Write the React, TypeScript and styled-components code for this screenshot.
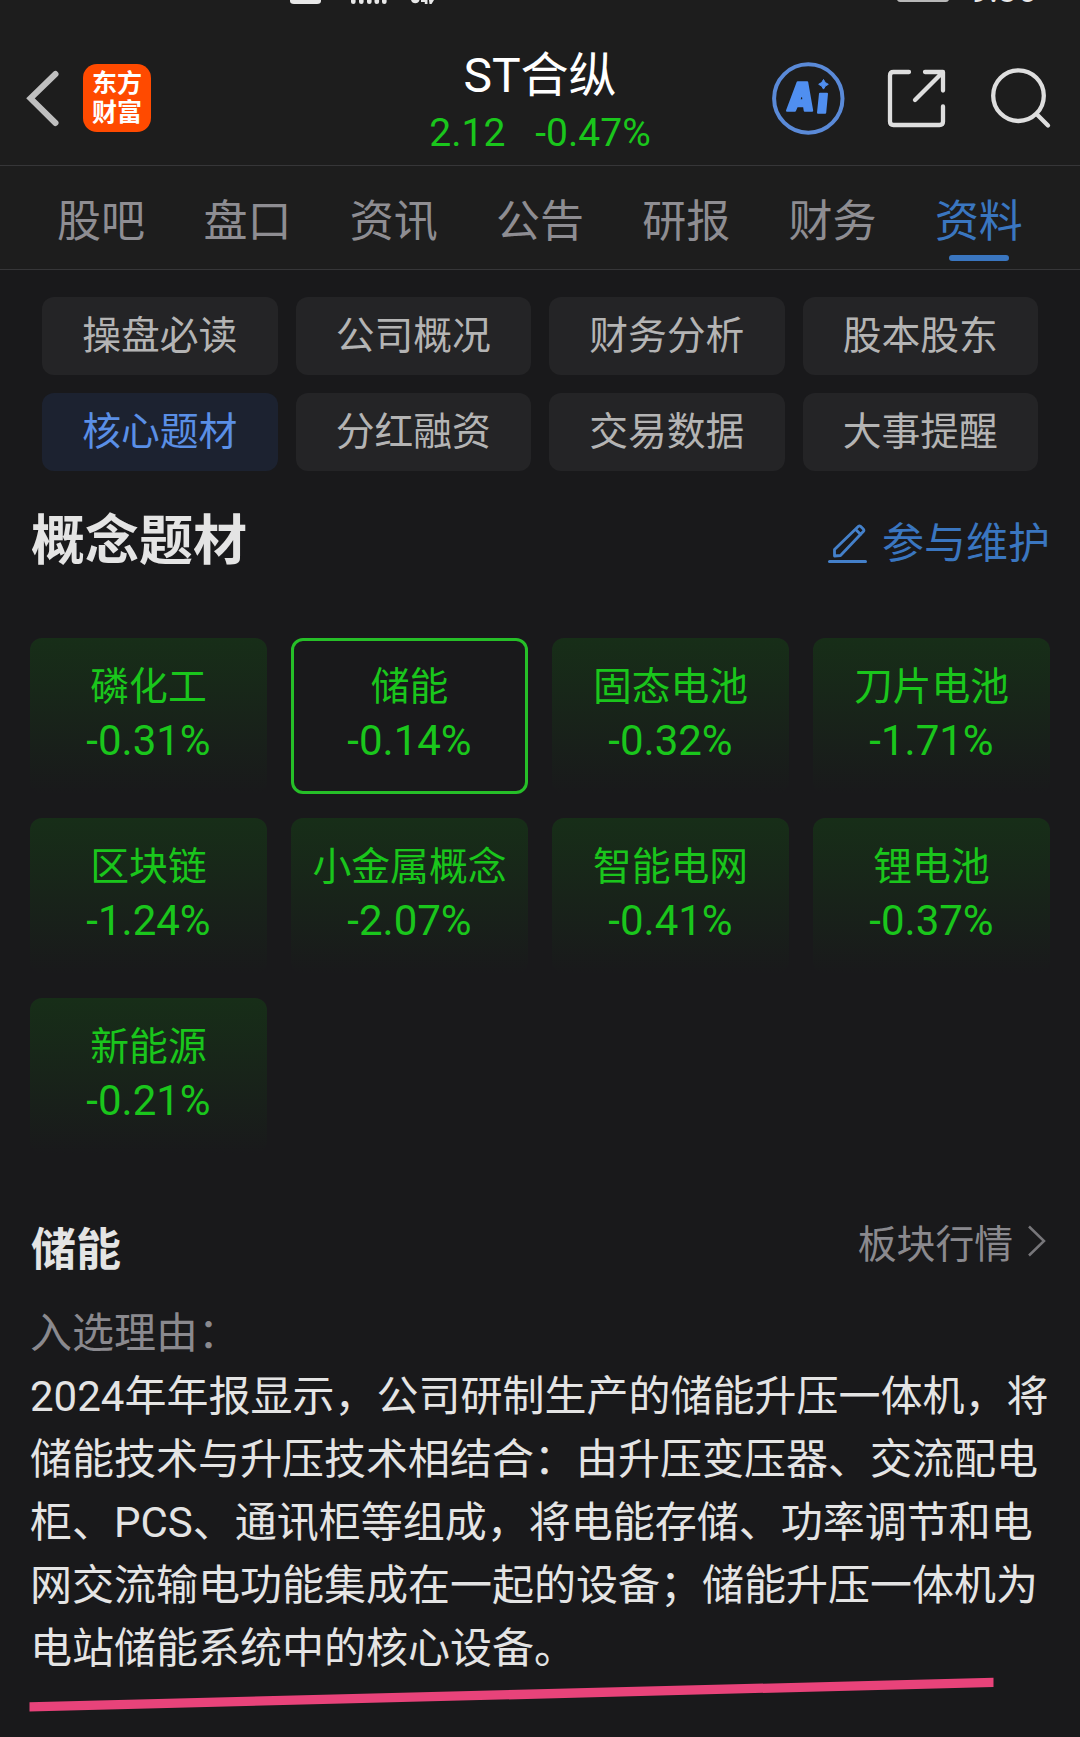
import React from "react";
import styled, { createGlobalStyle } from "styled-components";

const GlobalStyle = createGlobalStyle`
  *, *::before, *::after { box-sizing: border-box; }
  html, body { margin: 0; background: #19191b; }
  body { font-family: Roboto, "Noto Sans CJK SC", sans-serif; }
  h1, h2, p { margin: 0; font-weight: 400; }
  button { border: 0; padding: 0; margin: 0; background: none; font: inherit; color: inherit; }
  svg { display: block; flex: none; }
`;

const GREEN = "#1ac61c";
const BLUE = "#3a76c0";

const Screen = styled.div`
  position: relative;
  width: 1080px;
  height: 1737px;
  overflow: hidden;
  background: #19191b;
  color: #e4e4e4;
`;

const StatusBar = styled.div`
  height: 30px;
  display: flex;
  justify-content: space-between;
  align-items: flex-start;
  padding: 0 43px 0 290px;
`;

const StatusGroup = styled.div`
  display: flex;
  align-items: flex-start;
`;

const Clock = styled.span`
  height: 4px;
  margin-left: 21px;
  font-size: 35px;
  line-height: 40px;
  display: flex;
  align-items: flex-end;
  overflow: hidden;
  color: #e8e8e8;
  span { margin-bottom: -7px; }
`;

const Top = styled.header`
  background: #1d1d1d;
`;

const NavBar = styled.div`
  display: grid;
  grid-template-columns: 1fr auto 1fr;
  height: 136px;
  border-bottom: 1px solid #363638;
`;

const NavLeft = styled.div`
  display: flex;
  align-items: center;
  gap: 23px;
  height: 136px;
  padding-left: 26px;
`;

const NavRight = styled.div`
  display: flex;
  align-items: center;
  justify-content: flex-end;
  height: 136px;
  padding-right: 28px;
`;

const AppLogo = styled.div`
  display: flex;
  flex-direction: column;
  align-items: center;
  justify-content: center;
  width: 68px;
  height: 68px;
  border-radius: 14px;
  background: #ff4a00;
  color: #fff;
  font-size: 25px;
  font-weight: 700;
  line-height: 29px;
`;

const StockHead = styled.div`
  display: flex;
  flex-direction: column;
  align-items: center;
`;

const StockName = styled.h1`
  margin-top: 18px;
  font-size: 48px;
  line-height: 56px;
  color: #fff;
`;

const Quote = styled.div`
  display: flex;
  gap: 30px;
  margin-top: 6px;
  font-size: 39px;
  line-height: 47px;
  color: ${GREEN};
`;

const Tabs = styled.nav`
  display: grid;
  grid-template-columns: repeat(7, 146.3px);
  justify-content: center;
  height: 104px;
  border-bottom: 1px solid #363638;
`;

const Tab = styled.button<{ $active?: boolean }>`
  display: flex;
  flex-direction: column;
  align-items: center;
  font-size: 44px;
  line-height: 60px;
  padding-top: 26px;
  color: ${(p) => (p.$active ? BLUE : "#8e8d92")};
  &::after {
    content: "";
    width: 60px;
    height: 6px;
    margin-top: 3px;
    border-radius: 3px;
    background: ${(p) => (p.$active ? BLUE : "transparent")};
  }
`;

const Chips = styled.div`
  display: grid;
  grid-template-columns: repeat(4, 1fr);
  gap: 18px;
  padding: 27px 42px 0;
`;

const Chip = styled.button<{ $active?: boolean }>`
  height: 78px;
  padding-bottom: 1px;
  border-radius: 12px;
  font-size: 38.8px;
  line-height: 56px;
  background: ${(p) => (p.$active ? "#1c2230" : "#242426")};
  color: ${(p) => (p.$active ? "#5a8fe6" : "#b4b4b4")};
`;

const SectionHead = styled.div<{ $height: number; $top?: number }>`
  display: flex;
  align-items: center;
  justify-content: space-between;
  height: ${(p) => p.$height}px;
  margin-top: ${(p) => p.$top ?? 0}px;
  padding: 0 31px;
`;

const Heading = styled.h2<{ $size: number }>`
  font-size: ${(p) => p.$size}px;
  line-height: 1.4;
  font-weight: 700;
  color: #e4e4e4;
`;

const EditLink = styled.a`
  display: flex;
  align-items: center;
  gap: 15px;
  margin: 4px -1px 0 0;
  font-size: 42px;
  line-height: 60px;
  color: ${BLUE};
`;

const BoardLink = styled.a`
  display: flex;
  align-items: center;
  gap: 14px;
  margin-top: -10px;
  padding-right: 2px;
  font-size: 38.8px;
  line-height: 56px;
  color: #8a898e;
  svg { margin-bottom: 8px; }
`;

const Cards = styled.div`
  display: grid;
  grid-template-columns: repeat(4, 237px);
  gap: 24px;
  margin-top: 25px;
  padding: 0 30px;
`;

const Card = styled.button<{ $selected?: boolean }>`
  display: flex;
  flex-direction: column;
  align-items: center;
  height: 156px;
  padding-top: ${(p) => (p.$selected ? 18 : 21)}px;
  border: ${(p) => (p.$selected ? `3px solid #26bf28` : "0")};
  border-radius: 12px;
  background: ${(p) => (p.$selected ? "transparent" : "linear-gradient(180deg, #172e18 0%, #19191b 100%)")};
  color: ${GREEN};
`;

const CardName = styled.span`
  font-size: 38.8px;
  line-height: 56px;
`;

const CardChange = styled.span`
  font-size: 42px;
  line-height: 50px;
  margin-top: 1px;
`;

const Reason = styled.section`
  padding: 0 30px;
  font-size: 42px;
  line-height: 63px;
`;

const ReasonLabel = styled.p`
  color: #8a898e;
`;

const ReasonLine = styled.p`
  white-space: nowrap;
`;

const Marker = styled.svg`
  position: absolute;
  left: 0;
  bottom: 0;
`;

const tabs = ["股吧", "盘口", "资讯", "公告", "研报", "财务", "资料"];
const chips = ["操盘必读", "公司概况", "财务分析", "股本股东", "核心题材", "分红融资", "交易数据", "大事提醒"];
const concepts: [string, string][] = [
  ["磷化工", "-0.31%"],
  ["储能", "-0.14%"],
  ["固态电池", "-0.32%"],
  ["刀片电池", "-1.71%"],
  ["区块链", "-1.24%"],
  ["小金属概念", "-2.07%"],
  ["智能电网", "-0.41%"],
  ["锂电池", "-0.37%"],
  ["新能源", "-0.21%"],
];
const reasonLines = [
  "2024年年报显示，公司研制生产的储能升压一体机，将",
  "储能技术与升压技术相结合：由升压变压器、交流配电",
  "柜、PCS、通讯柜等组成，将电能存储、功率调节和电",
  "网交流输电功能集成在一起的设备；储能升压一体机为",
  "电站储能系统中的核心设备。",
];

const StatusIcons = () => (
  <svg width="150" height="6" viewBox="290 0 150 6" fill="#e8e8e8">
    <path d="M290 0h31v1q0 3-4 3h-23q-4 0-4-3z" />
    {[351, 359, 367, 374.5, 382].map((x) => (
      <path key={x} d={`M${x} 0h4.600v2q0 2-2.300 2t-2.300-2z`} />
    ))}
    <path d="M411 0h8.500q-1 3.300-4.200 3.300T411 0zM421 0h6.500v4h-2.700V2H421zM429 0h5l-2.500 4h-2z" />
  </svg>
);

const BackIcon = () => (
  <svg width="34" height="60" viewBox="26 68 34 60" fill="none" stroke="#bfbfbf" strokeWidth="6">
    <path d="M55.500 74 30.500 98.300 55.500 123" strokeLinecap="round" strokeLinejoin="miter" />
  </svg>
);

const AiIcon = () => (
  <svg width="74" height="74" viewBox="771.300 61.300 74 74">
    <circle cx="808.600" cy="98.800" r="34.200" fill="none" stroke="#5a8ad8" strokeWidth="4" />
    <g fill="#508ff0" stroke="#508ff0" strokeWidth="2" strokeLinejoin="round">
      <path
        fillRule="evenodd"
        d="M798 82.500h9.500l5 28.500h-7.500l-.7-4.500h-7l-2 4.500h-8zM802.800 92.500l-3.300 8h4.200z"
      />
      <path d="M820.300 94h7l-1.800 19h-7.200z" />
      <path d="M823.800 79.800q1.200 3.700 4.800 4.800-3.600 1.200-4.800 4.800-1.200-3.600-4.800-4.800 3.600-1.200 4.800-4.800z" strokeWidth="1" />
    </g>
  </svg>
);

const ShareIcon = () => (
  <svg width="59" height="59" viewBox="887 69 59 59" fill="none" stroke="#dedede" strokeWidth="4.300" strokeLinecap="round" strokeLinejoin="round">
    <path d="M909 72h-15.500q-3.500 0-3.500 3.500v46q0 3.500 3.500 3.500h46q3.500 0 3.500-3.500V106.500" />
    <path d="M925 72h18v18.500M941.500 73.500 915 100" />
  </svg>
);

const SearchIcon = () => (
  <svg width="61" height="61" viewBox="990.500 68 61 61" fill="none" stroke="#dedede" strokeWidth="4.300" strokeLinecap="round">
    <circle cx="1018" cy="95.700" r="25.300" />
    <path d="M1036.500 114.500 1047.500 125.500" />
  </svg>
);

const PencilIcon = () => (
  <svg width="40" height="40" viewBox="827 525 40 40" fill="none" stroke="#4480ca" strokeWidth="2.800" strokeLinecap="round" strokeLinejoin="round">
    <path d="M834.500 557v-6.500L858.500 527.300q1-.8 2 0l3 3q.8 1 0 2L840.500 556.500zM855.500 530.300l5.200 5.200" />
    <path d="M829.500 562.500h36" strokeWidth="3" />
  </svg>
);

const ChevronIcon = () => (
  <svg width="20" height="34" viewBox="1027.500 1222.500 20 34" fill="none" stroke="#77767a" strokeWidth="2.500">
    <path d="M1029.500 1225 1044.500 1239.500 1029.500 1254" />
  </svg>
);

const Spaced = styled.div<{ $left: number }>`
  margin-left: ${(p) => p.$left}px;
`;

export default function App() {
  return (
    <Screen>
      <GlobalStyle />
      <Top>
        <StatusBar>
          <StatusIcons />
          <StatusGroup>
            <svg width="52" height="3" viewBox="0 0 52 3">
              <path d="M0 0h52q-1 2-3 2H3q-2 0-3-2z" fill="#b8b8b8" />
            </svg>
            <Clock>
              <span>9:36</span>
            </Clock>
          </StatusGroup>
        </StatusBar>
        <NavBar>
          <NavLeft>
            <BackIcon />
            <AppLogo>
              <span>东方</span>
              <span>财富</span>
            </AppLogo>
          </NavLeft>
          <StockHead>
            <StockName>ST合纵</StockName>
            <Quote>
              <span>2.12</span>
              <span>-0.47%</span>
            </Quote>
          </StockHead>
          <NavRight>
            <AiIcon />
            <Spaced $left={42}>
              <ShareIcon />
            </Spaced>
            <Spaced $left={45}>
              <SearchIcon />
            </Spaced>
          </NavRight>
        </NavBar>
        <Tabs>
          {tabs.map((t) => (
            <Tab key={t} $active={t === "资料"}>
              {t}
            </Tab>
          ))}
        </Tabs>
      </Top>
      <Chips>
        {chips.map((c) => (
          <Chip key={c} $active={c === "核心题材"}>
            {c}
          </Chip>
        ))}
      </Chips>
      <SectionHead $height={142}>
        <Heading $size={54}>概念题材</Heading>
        <EditLink>
          <PencilIcon />
          参与维护
        </EditLink>
      </SectionHead>
      <Cards>
        {concepts.map(([name, change]) => (
          <Card key={name} $selected={name === "储能"}>
            <CardName>{name}</CardName>
            <CardChange>{change}</CardChange>
          </Card>
        ))}
      </Cards>
      <SectionHead $height={104} $top={44}>
        <Heading $size={45}>储能</Heading>
        <BoardLink>
          板块行情
          <ChevronIcon />
        </BoardLink>
      </SectionHead>
      <Reason>
        <ReasonLabel>入选理由：</ReasonLabel>
        {reasonLines.map((line) => (
          <ReasonLine key={line}>{line}</ReasonLine>
        ))}
      </Reason>
      <Marker width="1080" height="67" viewBox="0 1670 1080 67">
        <path d="M29.500 1702.200 993.500 1677.800V1687L29.500 1711.600z" fill="#e8437a" />
      </Marker>
    </Screen>
  );
}
